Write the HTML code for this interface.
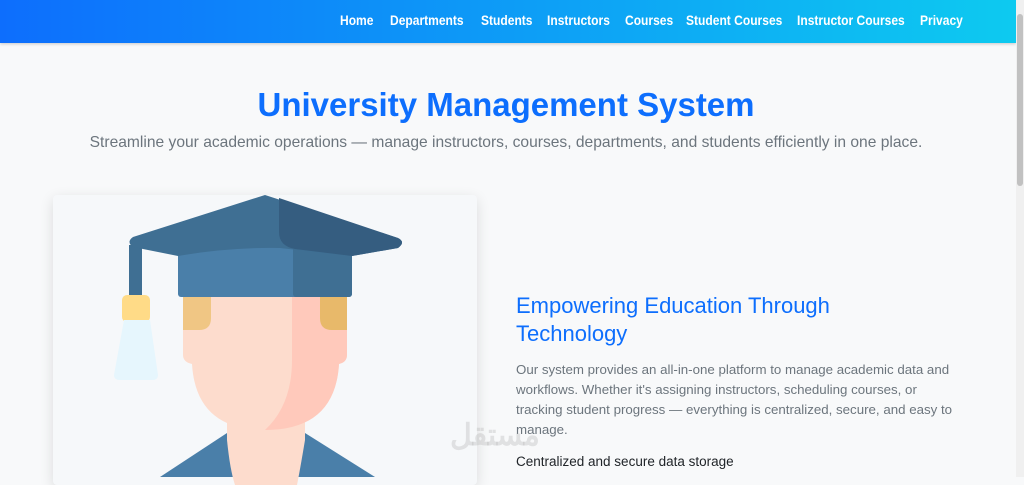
<!DOCTYPE html>
<html><head><style>
*{margin:0;padding:0;box-sizing:border-box}
body{width:1024px;height:477px;overflow:hidden;background:#f8f9fa;font-family:"Liberation Sans",sans-serif;position:relative}
nav{position:absolute;left:0;top:0;width:1016px;height:43px;background:linear-gradient(90deg,#0d6efd,#0dcaf0);box-shadow:0 1px 3px rgba(0,0,0,.2)}
nav span{position:absolute;top:12px;color:#fff;font-size:14px;font-weight:bold;white-space:nowrap;transform:scaleX(.86);transform-origin:left}
.sb{position:absolute;right:0;top:0;width:8px;height:477px;background:#f0f0f0}
.sb i{position:absolute;left:1px;top:14px;width:6px;height:172px;background:#c1c1c1;border-radius:3px}
h1{position:absolute;left:0;width:1012px;text-align:center;top:86px;font-size:33px;color:#0d6efd;font-weight:bold}
.sub{position:absolute;left:0;width:1012px;text-align:center;top:134px;font-size:15.6px;color:#6c757d}
.card{position:absolute;left:53px;top:195px;width:424px;height:290px;background:#f6f8fa;box-shadow:0 4px 14px rgba(0,0,0,.12);border-radius:4px;overflow:hidden}
h2{position:absolute;left:516px;top:292px;font-size:22px;line-height:28px;color:#0d6efd;font-weight:normal;width:400px}
p{position:absolute;left:516px;top:360px;width:450px;font-size:13.3px;line-height:20px;color:#6c757d}
.li{position:absolute;left:516px;top:454px;font-size:13.5px;color:#212529}
.wm{position:absolute;left:450px;top:418px;font-size:30px;color:rgba(180,180,180,.35);font-weight:bold}
</style></head><body>
<nav>
<span style="left:340px">Home</span>
<span style="left:390px">Departments</span>
<span style="left:481px">Students</span>
<span style="left:547px">Instructors</span>
<span style="left:625px">Courses</span>
<span style="left:686px">Student Courses</span>
<span style="left:797px">Instructor Courses</span>
<span style="left:920px">Privacy</span>
</nav>
<div class="sb"><i></i></div>
<h1>University Management System</h1>
<div class="sub">Streamline your academic operations — manage instructors, courses, departments, and students efficiently in one place.</div>
<div class="card">
<svg width="424" height="290" viewBox="53 195 424 290">
<path d="M160 477 L227 433 L305 433 L375 477Z" fill="#4a7fa9"/>
<path d="M227 405 H305 V440 Q300 470 297 485 H235 Q230 470 227 440Z" fill="#fddccd"/>
<path d="M183 296 H347 V355 Q347 362 339 364 Q335 430 265 430 Q196 430 192 364 Q183 362 183 355Z" fill="#fddccd"/>
<path d="M292 296 H347 V355 Q347 362 339 364 Q335 430 265 430 Q292 405 292 360Z" fill="#ffc9bb"/>
<path d="M183 296 H211 V318 Q211 330 199 330 H183Z" fill="#f0c684"/>
<path d="M347 296 H320 V318 Q320 330 332 330 H347Z" fill="#e8b96a"/>
<rect x="129" y="245" width="13" height="55" fill="#3f6f93"/>
<rect x="122" y="295" width="28" height="27" rx="5" fill="#ffdb87"/>
<path d="M124 320 H150 L158 375 Q158 380 152 380 H120 Q114 380 114 375Z" fill="#e6f6fd"/>
<rect x="178" y="246" width="174" height="51" rx="3" fill="#4a7fa9"/>
<rect x="293" y="246" width="59" height="51" rx="3" fill="#3f6f93"/>
<path d="M265 195 L133 237 Q126 242 133 247 L178 256 Q230 247 280 248 L352 256 L398 248 Q406 242 398 238Z" fill="#3f6f93"/>
<path d="M279 198 L398 238 Q406 242 398 248 L352 256 L295 249 Q279 246 279 232Z" fill="#355d80"/>
</svg>
</div>
<h2>Empowering Education Through Technology</h2>
<p>Our system provides an all-in-one platform to manage academic data and workflows. Whether it's assigning instructors, scheduling courses, or tracking student progress — everything is centralized, secure, and easy to manage.</p>
<div class="wm">مستقل</div>
<div class="li">Centralized and secure data storage</div>
</body></html>
